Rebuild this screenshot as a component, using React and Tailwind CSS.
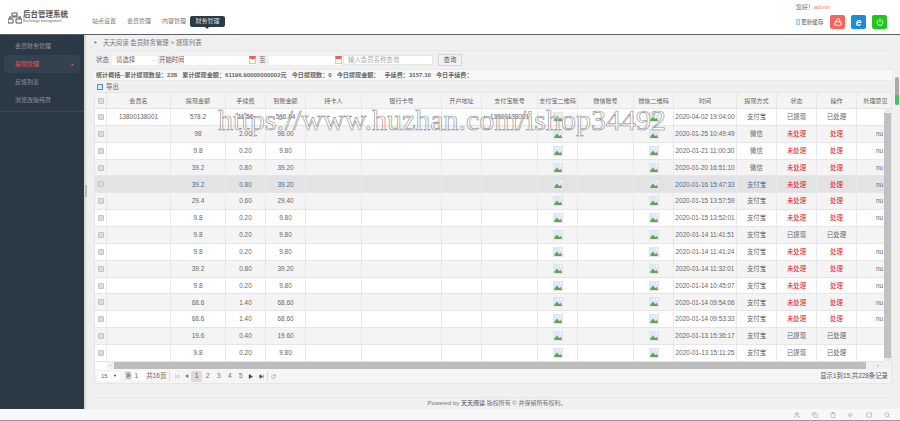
import React from 'react';
import { Lock, Power, Play, SkipBack, SkipForward, RotateCw, Users, Copy, Clipboard, Volume1, Tablet, Search, ChevronDown, ChevronRight } from 'lucide-react';

const font = "font-['Liberation_Sans','Noto_Sans_CJK_SC',sans-serif]";

// column widths, taken from the header cells
const columns = [
  { label: '', width: 'w-[12px]' },
  { label: '会员名', width: 'w-[64px]' },
  { label: '提现金额', width: 'w-[55px]' },
  { label: '手续费', width: 'w-[40px]' },
  { label: '到账金额', width: 'w-[40px]' },
  { label: '持卡人', width: 'w-[56px]' },
  { label: '银行卡号', width: 'w-[80px]' },
  { label: '开户地址', width: 'w-[40px]' },
  { label: '支付宝账号', width: 'w-[56px]' },
  { label: '支付宝二维码', width: 'w-[40px]' },
  { label: '微信账号', width: 'w-[56px]' },
  { label: '微信二维码', width: 'w-[40px]' },
  { label: '时间', width: 'w-[63px]' },
  { label: '提现方式', width: 'w-[40px]' },
  { label: '状态', width: 'w-[40px]' },
  { label: '操作', width: 'w-[40px]' },
  { label: '处理意见', width: 'w-[38px]' },
];

const rows = [
  { name: '13800138001', amount: '578.2', fee: '11.56', net: '566.64', alipay: '13800138001', time: '2020-04-02 19:04:00', way: '支付宝', done: true, note: '' },
  { amount: '98', fee: '2.00', net: '98.00', time: '2020-01-25 10:49:49', way: '微信' },
  { amount: '9.8', fee: '0.20', net: '9.80', time: '2020-01-21 11:00:30', way: '微信' },
  { amount: '39.2', fee: '0.80', net: '39.20', time: '2020-01-20 16:51:10', way: '微信' },
  { amount: '39.2', fee: '0.80', net: '39.20', time: '2020-01-16 15:47:33', way: '支付宝', hover: true },
  { amount: '29.4', fee: '0.60', net: '29.40', time: '2020-01-15 13:57:59', way: '支付宝' },
  { amount: '9.8', fee: '0.20', net: '9.80', time: '2020-01-15 13:52:01', way: '支付宝' },
  { amount: '9.8', fee: '0.20', net: '9.80', time: '2020-01-14 11:41:51', way: '支付宝', done: true, note: '' },
  { amount: '9.8', fee: '0.20', net: '9.80', time: '2020-01-14 11:41:24', way: '支付宝' },
  { amount: '39.2', fee: '0.80', net: '39.20', time: '2020-01-14 11:32:01', way: '支付宝' },
  { amount: '9.8', fee: '0.20', net: '9.80', time: '2020-01-14 10:45:07', way: '支付宝' },
  { amount: '68.6', fee: '1.40', net: '68.60', time: '2020-01-14 09:54:06', way: '支付宝' },
  { amount: '68.6', fee: '1.40', net: '68.60', time: '2020-01-14 09:53:33', way: '支付宝' },
  { amount: '19.6', fee: '0.40', net: '19.60', time: '2020-01-13 15:36:17', way: '支付宝', done: true, note: '' },
  { amount: '9.8', fee: '0.20', net: '9.80', time: '2020-01-13 15:11:25', way: '支付宝', done: true, note: '' },
];

// browser's broken image placeholder
const BrokenImage = () => (
  <svg width="10" height="10" viewBox="0 0 10 10" className="block">
    <rect width="10" height="10" fill="#e4e4e4" />
    <rect x="1" y="1" width="7" height="7" fill="#dfeaf8" />
    <path d="M1 8 L4 4.5 L6 7 L8 6 L9 9 L2 9 Z" fill="#5fa84a" />
    <path d="M7 1 L9 3 L7 3 Z" fill="#fff" />
  </svg>
);

const Check = () => <span className="block w-[6px] h-[6px] rounded-[1px] bg-[#dcdcdc] border border-[#c4c4c4]" />;

const Cell = ({ width, className = '', children }) => (
  <div className={`${width} shrink-0 h-full flex items-center justify-center border-r border-[#e8e8e8] overflow-hidden whitespace-nowrap ${className}`}>
    {children}
  </div>
);

const Row = ({ row, index }) => {
  const bg = row.hover ? 'bg-[#e3e3e3] text-[#4a6d9c]' : index % 2 ? 'bg-[#f4f4f4] text-[#666]' : 'bg-white text-[#666]';
  const w = columns.map((c) => c.width);
  return (
    <div className={`flex h-[16.87px] border-b border-[#e6e6e6] ${bg}`}>
      <Cell width={w[0]} className="bg-transparent"><Check /></Cell>
      <Cell width={w[1]}>{row.name}</Cell>
      <Cell width={w[2]}>{row.amount}</Cell>
      <Cell width={w[3]}>{row.fee}</Cell>
      <Cell width={w[4]}>{row.net}</Cell>
      <Cell width={w[5]} />
      <Cell width={w[6]} />
      <Cell width={w[7]} />
      <Cell width={w[8]}>{row.alipay}</Cell>
      <Cell width={w[9]}><BrokenImage /></Cell>
      <Cell width={w[10]} />
      <Cell width={w[11]}><BrokenImage /></Cell>
      <Cell width={w[12]}>{row.time}</Cell>
      <Cell width={w[13]}>{row.way}</Cell>
      <Cell width={w[14]} className={row.done ? '' : 'text-[#e02020]'}>{row.done ? '已提现' : '未处理'}</Cell>
      <Cell width={w[15]} className={row.done ? '' : 'text-[#e02020]'}>{row.done ? '已处理' : '处理'}</Cell>
      <div className="flex-1 flex items-center justify-end pr-[1px]">{row.done ? '' : 'nu'}</div>
    </div>
  );
};

const CalendarIcon = () => (
  <span className="block w-[7px] h-[8px] bg-white border border-[#ccc] border-t-[3px] border-t-[#e0685a]" />
);

const PageNum = ({ children, active }) => (
  <span className={`w-[11px] h-[11px] flex items-center justify-center rounded-[1px] text-[7px] ${active ? 'bg-[#dcdcdc] text-[#555]' : 'text-[#777]'}`}>
    {children}
  </span>
);

const App = () => {
  return (
    <div className={`relative h-[421px] w-full overflow-hidden flex flex-col bg-[#f0f0f0] text-[6.4px] text-[#666] ${font}`}>
      {/* top bar */}
      <header className="h-[35px] shrink-0 bg-white border-b border-[#5c6166] flex items-start">
        <div className="w-[92px] shrink-0 pl-[8px] pt-[11px] flex gap-[1px]">
          <svg width="14" height="12" viewBox="0 0 14 12" className="mt-[1px] shrink-0">
            <path d="M4 1h5v3H4zM1 5h12M2 5v2M12 5v2M0 7h5v4H0zM8 7h6v4H8z" fill="none" stroke="#555" strokeWidth="1" />
          </svg>
          <div className="leading-none">
            <div className="text-[7.5px] text-[#555] font-bold whitespace-nowrap">后台管理系统</div>
            <div className="text-[3.6px] text-[#666] mt-[1px] whitespace-nowrap">Backstage management</div>
          </div>
        </div>
        <nav className="flex items-center h-[12px] mt-[15px] text-[6px] text-[#777]">
          <span className="w-[35px]">站点设置</span>
          <span className="w-[35px]">会员管理</span>
          <span className="w-[28px]">内容管理</span>
          <span className="relative w-[35px] h-[11px] bg-[#2c3a48] text-[#ddd] rounded-[2px] flex items-center justify-center">
            财务管理
            <span className="absolute -bottom-[2px] left-[15px] border-x-[2px] border-x-transparent border-t-[2px] border-t-[#2c3a48]" />
          </span>
        </nav>
        <div className="ml-auto w-[104px] shrink-0 pt-[4px]">
          <div className="text-[6px] leading-[7px]">您好！<span className="text-[#f47c7c]">admin</span></div>
          <div className="flex items-center mt-[4px]">
            <span className="block w-[4px] h-[6px] bg-[#cfe4f7] border border-[#a9cbea] mr-[1px]" />
            <span className="w-[29px] text-[5.6px] text-[#555] whitespace-nowrap">更新缓存</span>
            <span className="w-[15px] h-[14px] rounded-[2px] bg-[#f8645c] flex items-center justify-center"><Lock size={8} color="#fff" strokeWidth={3} /></span>
            <span className="w-[15px] h-[14px] rounded-[2px] bg-[#1a8fd8] flex items-center justify-center ml-[6px] text-white font-bold text-[10px] italic">e</span>
            <span className="w-[15px] h-[14px] rounded-[2px] bg-[#1fc61f] flex items-center justify-center ml-[6px]"><Power size={8} color="#fff" strokeWidth={2.5} /></span>
          </div>
        </div>
      </header>

      <div className="flex flex-1 min-h-0">
        {/* sidebar */}
        <aside className="w-[84px] shrink-0 bg-[#2b3846] text-[#8b949c] text-[6px]">
          <div className="px-[4px] pt-[2px] pb-[2px] border-b border-[#3b4650]">
            <div className="h-[18px] pl-[11px] flex items-center">会员财务管理</div>
            <div className="h-[18px] pl-[11px] pr-[6px] flex items-center justify-between bg-[#344250] rounded-[3px] text-[#e0584f]">
              提现管理
              <Play size={3} fill="#e0584f" color="#e0584f" />
            </div>
            <div className="h-[18px] pl-[11px] flex items-center">反馈列表</div>
            <div className="h-[18px] pl-[11px] flex items-center">浏览改版纯界</div>
          </div>
        </aside>

        {/* main content */}
        <main className="flex-1 min-w-0 relative flex flex-col pl-[8px] pr-[8px] border-l-2 border-[#d8d8d8]">
          <span className="absolute -left-[1px] top-[150px] w-[2px] h-[12px] bg-[#bbb]" />
          <div className="h-[16px] shrink-0 flex items-center gap-[5px] border-b border-[#e8e8e8] pl-[0px] text-[#777]">
            <Play size={3} fill="#3a8ed0" color="#3a8ed0" />
            <span className="pl-[1px]">天天阅读 会员财务管理 &gt; 提现列表</span>
          </div>

          <div className="h-[18px] shrink-0 flex items-center text-[#666]">
            <span className="w-[18px] pl-[2px]">状态</span>
            <span className="w-[45px] h-[9px] bg-white flex items-center justify-between pl-[4px] pr-[1px]">
              请选择<ChevronDown size={5} color="#6a9cc8" />
            </span>
            <span className="w-[27px] pl-[2px] whitespace-nowrap">开始时间</span>
            <span className="w-[72px] h-[9px] bg-white flex items-center justify-end"><CalendarIcon /></span>
            <span className="w-[13px] text-center">至</span>
            <span className="w-[73px] h-[9px] bg-white flex items-center justify-end"><CalendarIcon /></span>
            <span className="w-[90px] h-[10px] ml-[1px] bg-white border border-[#e6e6e6] pl-[4px] flex items-center text-[#aaa]">输入会员名称查询</span>
            <span className="w-[24px] h-[12px] ml-[5px] bg-[#f2f2f2] border border-[#d6d6d6] flex items-center justify-center text-[#555]">查询</span>
          </div>

          <div className="h-[12px] shrink-0 bg-[#f8f8f8] border-y border-[#e9e9e9] flex items-center pl-[2px] whitespace-pre text-[6.1px] text-[#666] font-bold">
            统计概括--累计提现数量：228   累计提现金额：61196.90000000002元   今日提现数：0   今日提现金额：   手续费：3157.10   今日手续费：
          </div>

          <div className="h-[11px] shrink-0 flex items-center pl-[3px] gap-[3px]">
            <span className="block w-[6px] h-[6px] bg-[#dbe8f5] border border-[#4f8cc4]" />
            导出
          </div>

          {/* data grid */}
          <div className="h-[292px] shrink-0 border border-[#e6e6e6] border-t-0 bg-white flex flex-col overflow-hidden">
            <div className="flex h-[17px] shrink-0 bg-[#f4f4f4] border-y border-[#e6e6e6] text-[6.1px] text-[#666]">
              {columns.map((c, i) => (
                <Cell key={i} width={c.width}>{i === 0 ? <Check /> : c.label}</Cell>
              ))}
              <div className="flex-1 flex items-center justify-center whitespace-nowrap">处理意见</div>
            </div>
            <div className="flex flex-1 min-h-0">
              <div className="flex-1 min-w-0 flex flex-col">
                {rows.map((row, i) => <Row key={i} row={row} index={i} />)}
              </div>
              <div className="w-[7px] shrink-0 bg-[#f1f1f1] flex flex-col items-center">
                <ChevronDown size={4} className="rotate-180 text-[#999]" />
                <span className="block w-full flex-1 bg-[#c1c1c1]" />
                <ChevronDown size={4} className="text-[#555]" />
              </div>
            </div>
            <div className="h-[7px] shrink-0 flex bg-[#f1f1f1] items-center">
              <span className="w-[12px] h-full bg-white" />
              <span className="w-[7px] text-center text-[4px] text-[#888]">‹</span>
              <span className="w-[752px] h-full bg-[#bdbdbd]" />
              <ChevronRight size={4} className="ml-auto mr-[11px] text-[#444]" />
            </div>
            <div className="h-[14px] shrink-0 bg-[#f5f5f5] flex items-center text-[#666]">
              <span className="w-[22px] h-[9px] ml-[3px] bg-white flex items-center justify-between px-[3px] text-[6px]">15<span className="text-[4px] text-[#333]">▼</span></span>
              <span className="ml-[5px]">第</span>
              <span className="w-[13px] h-[10px] ml-[1px] bg-white pl-[2px] flex items-center">1</span>
              <span className="ml-[1px] whitespace-nowrap">共16页</span>
              <span className="w-[1px] h-[10px] bg-[#ddd] ml-[3px] mr-[5px]" />
              <SkipBack size={5} className="text-[#999] mr-[5px]" />
              <Play size={4} fill="#777" color="#777" className="rotate-180 mr-[2px]" />
              <PageNum active>1</PageNum>
              <PageNum>2</PageNum>
              <PageNum>3</PageNum>
              <PageNum>4</PageNum>
              <PageNum>5</PageNum>
              <Play size={5} fill="#444" color="#444" className="ml-[2px] mr-[6px]" />
              <SkipForward size={5} fill="#444" color="#444" />
              <span className="w-[1px] h-[10px] bg-[#ddd] ml-[3px] mr-[3px]" />
              <RotateCw size={5} className="text-[#777]" />
              <span className="ml-auto mr-[3px] text-[#555]">显示1到15,共228条记录</span>
            </div>
          </div>

          <div className="mt-[13px] border-t border-[#e6e6e6] flex-1 flex items-center justify-center text-[#777] text-[6px]">
            <span className="ml-[8px]">Powered by <span className="text-[#444]">天天阅读</span> 版权所有 © 并保留所有权利。</span>
          </div>
        </main>
      </div>

      {/* bottom strip */}
      <footer className="h-[12px] shrink-0 bg-[#f7f7f7] border-b border-[#8ea2ad] flex items-center justify-end gap-[12px] pr-[10px] text-[#999]">
        <Users size={6} />
        <Copy size={6} />
        <Clipboard size={6} />
        <Volume1 size={6} />
        <Tablet size={6} className="rotate-90" />
        <Search size={6} />
      </footer>

      {/* page scrollbar */}
      <div className="absolute right-[1px] top-[77px] w-[4px] h-[28px] rounded-[2px] overflow-hidden bg-[#a9a9a9]">
        <div className="absolute bottom-0 w-full h-[10px] bg-[#39c75b]" />
      </div>

      {/* site watermark */}
      <div className="absolute left-[218px] top-[103px] font-['Liberation_Serif',serif] text-[30px] leading-[34px] text-white/40 [-webkit-text-stroke:0.6px_#8a8a8a] whitespace-nowrap pointer-events-none">
        https://www.huzhan.com/ishop34492
      </div>
    </div>
  );
};

export default App;
